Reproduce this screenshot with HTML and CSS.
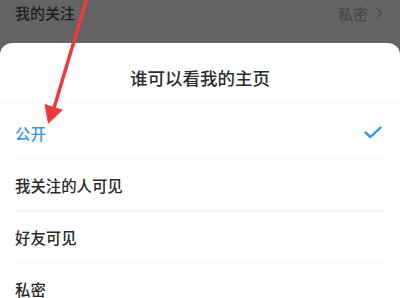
FILE: index.html
```html
<!DOCTYPE html>
<html lang="zh-CN">
<head>
<meta charset="utf-8">
<link rel="stylesheet" href="styles.css">
</head>
<body>
<div class="screen">
  <div class="bg-row">
    <span class="bg-label">我的关注</span>
    <span class="bg-value">私密<svg class="chev" viewBox="0 0 8 14" width="8" height="14"><path d="M1.5 1.5 L6.5 7 L1.5 12.5" fill="none" stroke="#4e4e4e" stroke-width="1.5"/></svg></span>
  </div>
  <div class="sheet">
    <div class="sheet-title">谁可以看我的主页</div>
    <ul class="options">
      <li class="option selected"><span>公开</span>
        <svg class="check" viewBox="0 0 18 13" width="18" height="13"><path d="M1.5 6.5 L6.5 11 L16.5 1.5" fill="none" stroke="#2e97e6" stroke-width="2.4" stroke-linecap="round" stroke-linejoin="round"/></svg>
      </li>
      <li class="option"><span>我关注的人可见</span></li>
      <li class="option"><span>好友可见</span></li>
      <li class="option"><span>私密</span></li>
    </ul>
  </div>
  <svg class="arrow" viewBox="0 0 400 298" width="400" height="298">
    <line x1="87" y1="-2" x2="54" y2="108" stroke="#f03a3a" stroke-width="3.5"/>
    <polygon points="48,124 44.5,104 63,109.8" fill="#f03a3a"/>
  </svg>
</div>
</body>
</html>
```

FILE: styles.css
```css
* { box-sizing: border-box; margin: 0; padding: 0; }
html, body { width: 400px; height: 298px; overflow: hidden; }
body {
  font-family: "Noto Sans CJK SC", "Noto Sans", sans-serif;
  background: #646464;
}
.screen {
  position: relative;
  width: 400px;
  height: 298px;
  overflow: hidden;
  background: #646464;
}
.bg-row {
  height: 43px;
  padding: 0 17px 17px 15px;
  display: flex;
  justify-content: space-between;
  align-items: center;
}
.bg-label {
  font-size: 15px;
  font-weight: 500;
  color: #1f1f1f;
  line-height: 26px;
}
.bg-value {
  font-size: 15px;
  font-weight: 500;
  color: #4a4a4a;
  display: flex;
  align-items: center;
  gap: 7px;
}
.chev { display: block; }
.sheet {
  background: #ffffff;
  border-radius: 12px 12px 0 0;
  height: 255px;
}
.sheet-title {
  height: 60px;
  display: flex;
  align-items: center;
  justify-content: center;
  padding-top: 10px;
  font-size: 17.5px;
  font-weight: 500;
  color: #2c2c2c;
  border-bottom: 1px solid #f4f4f4;
}
.options {
  list-style: none;
  padding-top: 4px;
}
.option {
  height: 52px;
  margin: 0 15px;
  display: flex;
  align-items: center;
  justify-content: space-between;
  font-size: 15.4px;
  font-weight: 500;
  color: #2a2a2a;
  border-bottom: 1px solid #f3f3f3;
}
.option.selected { color: #3497e0; }
.check { margin-right: 3px; }
.arrow {
  position: absolute;
  left: 0;
  top: 0;
  pointer-events: none;
}
```
